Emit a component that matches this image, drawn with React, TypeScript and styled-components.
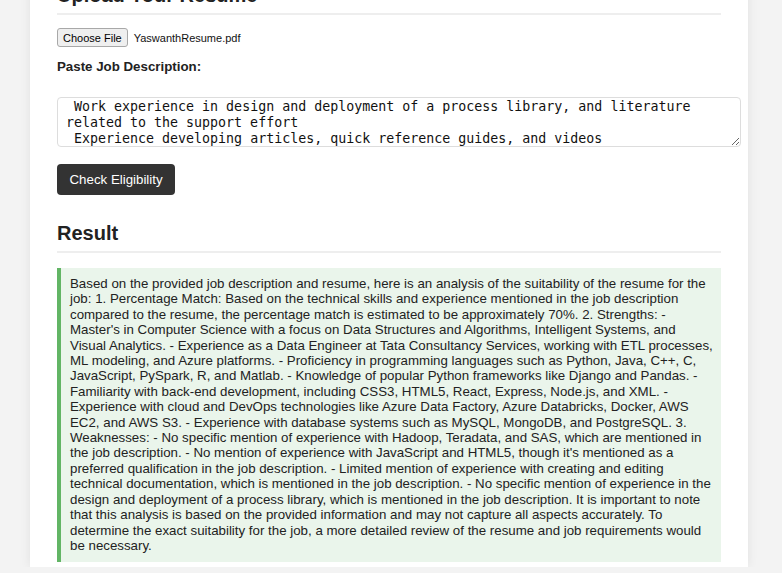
import styled, { createGlobalStyle } from 'styled-components';

const GlobalStyle = createGlobalStyle`
  html, body {
    margin: 0;
    padding: 0;
    background-color: #f3f3f3;
    overflow: hidden;
  }
  body {
    font-family: 'Liberation Sans', Arial, Helvetica, sans-serif;
    color: #222;
  }
`;

const Container = styled.div`
  width: 718px;
  box-sizing: border-box;
  margin: -16px 0 0 30px;
  padding: 0 27px 5px;
  background-color: #fff;
  box-shadow: 0 0 10px rgba(0, 0, 0, 0.08);
`;

const Heading = styled.h2<{ $gap?: number }>`
  margin: ${({ $gap }) => $gap ?? 0}px 0 0;
  padding-bottom: 6px;
  font-size: 20px;
  line-height: 23px;
  font-weight: 700;
  color: #222;
  border-bottom: 2px solid #eee;
`;

const FileRow = styled.div`
  display: flex;
  align-items: center;
  gap: 6px;
  margin-top: 13px;
  height: 19px;
  font-size: 11px;
`;

const FileButton = styled.button`
  height: 19px;
  padding: 0 5px;
  font-family: 'Liberation Sans', Arial, sans-serif;
  font-size: 11px;
  color: #000;
  background-color: #efefef;
  border: 1px solid #a8a8a8;
  border-radius: 3px;
`;

const FileName = styled.span`
  color: #111;
`;

const Label = styled.label`
  display: block;
  margin-top: 12px;
  font-size: 13.3px;
  line-height: 15px;
  font-weight: 700;
  color: #222;
`;

const JobText = styled.textarea`
  display: block;
  width: 100%;
  height: 47px;
  margin-top: 23px;
  padding: 1px 10px 0 8px;
  font-family: 'DejaVu Sans Mono', Menlo, monospace;
  font-size: 13.3px;
  line-height: 16px;
  color: #111;
  border: 1px solid #ddd;
  border-radius: 4px;
  overflow: hidden;
  resize: vertical;
`;

const SubmitButton = styled.button`
  display: block;
  margin-top: 17px;
  height: 31px;
  padding: 0 12.5px;
  font-family: 'Liberation Sans', Arial, sans-serif;
  font-size: 13.3px;
  color: #fff;
  background-color: #333;
  border: none;
  border-radius: 4px;
`;

const ResultBox = styled.div`
  margin-top: 15px;
  padding: 8px 4px 9px 9px;
  background-color: #eaf5eb;
  border-left: 4px solid #62b565;
  font-size: 13.3px;
  line-height: 15.4px;
  color: #222;
`;

const ResultLine = styled.span`
  display: block;
  white-space: nowrap;
`;

const jobDescription =
  ' Work experience in design and deployment of a process library, and literature related to the support effort\n Experience developing articles, quick reference guides, and videos\n Experience working with technical writers and subject matter experts';

const resultLines = [
  'Based on the provided job description and resume, here is an analysis of the suitability of the resume for the',
  'job: 1. Percentage Match: Based on the technical skills and experience mentioned in the job description',
  'compared to the resume, the percentage match is estimated to be approximately 70%. 2. Strengths: -',
  "Master's in Computer Science with a focus on Data Structures and Algorithms, Intelligent Systems, and",
  'Visual Analytics. - Experience as a Data Engineer at Tata Consultancy Services, working with ETL processes,',
  'ML modeling, and Azure platforms. - Proficiency in programming languages such as Python, Java, C++, C,',
  'JavaScript, PySpark, R, and Matlab. - Knowledge of popular Python frameworks like Django and Pandas. -',
  'Familiarity with back-end development, including CSS3, HTML5, React, Express, Node.js, and XML. -',
  'Experience with cloud and DevOps technologies like Azure Data Factory, Azure Databricks, Docker, AWS',
  'EC2, and AWS S3. - Experience with database systems such as MySQL, MongoDB, and PostgreSQL. 3.',
  'Weaknesses: - No specific mention of experience with Hadoop, Teradata, and SAS, which are mentioned in',
  "the job description. - No mention of experience with JavaScript and HTML5, though it's mentioned as a",
  'preferred qualification in the job description. - Limited mention of experience with creating and editing',
  'technical documentation, which is mentioned in the job description. - No specific mention of experience in the',
  'design and deployment of a process library, which is mentioned in the job description. It is important to note',
  'that this analysis is based on the provided information and may not capture all aspects accurately. To',
  'determine the exact suitability for the job, a more detailed review of the resume and job requirements would',
  'be necessary.',
];

const App = () => {
  return (
    <>
      <GlobalStyle />
      <Container>
        <Heading>Upload Your Resume</Heading>
        <FileRow>
          <FileButton type="button">Choose File</FileButton>
          <FileName>YaswanthResume.pdf</FileName>
        </FileRow>
        <Label htmlFor="jd">Paste Job Description:</Label>
        <JobText id="jd" defaultValue={jobDescription} />
        <SubmitButton type="button">Check Eligibility</SubmitButton>
        <Heading $gap={27}>Result</Heading>
        <ResultBox>
          {resultLines.map((line, i) => (
            <ResultLine key={i}>{line}</ResultLine>
          ))}
        </ResultBox>
      </Container>
    </>
  );
};

export default App;
